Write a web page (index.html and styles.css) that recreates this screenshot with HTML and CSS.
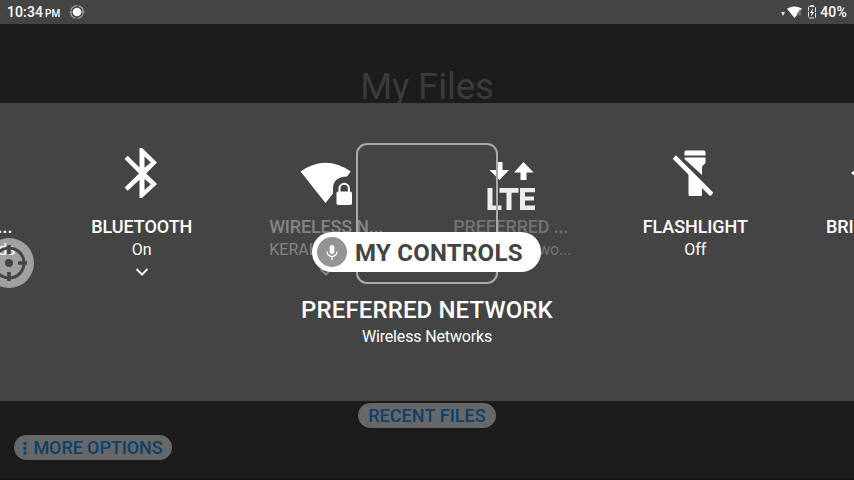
FILE: index.html
```html
<!DOCTYPE html>
<html lang="en">
<head>
<meta charset="utf-8">
<title>My Controls</title>
<link rel="stylesheet" href="styles.css">
</head>
<body>
<header class="status">
  <span class="clock">10:34<small>PM</small></span>
  <svg class="status-ring" width="16" height="16" viewBox="0 0 16 16"><circle cx="8" cy="8" r="4.300" fill="#fff"/><circle cx="8" cy="8" r="6.300" fill="none" stroke="#aaa" stroke-width="1.100" stroke-dasharray="8.300 1.600" stroke-dashoffset="-.8"/><path d="M.7 8h3M12.300 8h3" stroke="#bbb"/></svg>
  <svg class="signals" width="38" height="16" viewBox="0 0 38 16"><path d="M0 8h4L2 12z" fill="#ddd"/><path d="M6 4.800Q13.500 .2 21 4.800L13.500 14z" fill="#fff"/><path d="M19.500 5.500l-3 4.500h4M19 6v6" fill="none" stroke="#777" stroke-width="1.200"/><rect x="27.500" y="2.500" width="7" height="11.500" rx="1" fill="none" stroke="#e5e5e5" stroke-dasharray="5 1"/><path d="M29.500 1.500h3" stroke="#fff"/><path d="M32 4l-3 5h1.800l-.8 4 3-5h-1.800z" fill="#fff"/></svg>
  <span class="battery">40%</span>
</header>
<div class="title">My Files</div>
<main class="panel">
  <div class="cursor disc"></div>
  <div class="carousel">
    <section class="item">
      <div class="icon"></div>
      <h2>DO NOT DIS...</h2>
      <p>Allow all sounds</p>
    </section>
    <section class="item">
      <div class="icon"><svg width="60" height="60" viewBox="0 0 60 60"><path fill="#fff" fill-rule="evenodd" d="M27.500 5H30L45 19.500 34.200 30.500 45 41 30 55H27.500V36.800L15.700 47.800 12.600 44.500 27 30.500 12.600 16 15.700 12.700 27.500 24.500zM32.500 13.500V24.800L38.800 19.500zM32.500 36V47L38.800 41.200z"/></svg></div>
      <h2>BLUETOOTH</h2>
      <p>On</p>
      <svg class="chevron" width="14" height="10" viewBox="0 0 14 10"><path d="M1.500 2L7 7.500 12.500 2"/></svg>
    </section>
    <section class="item dim">
      <div class="icon"><svg width="60" height="60" viewBox="0 0 60 60"><path fill="#fff" d="M4.500 28.500Q29.500 11 54.700 28.500L51 33.500Q37 34 37 45.500V50.500L29.500 60z"/><rect x="40.500" y="48.500" width="15.500" height="13.500" rx="1.800" fill="#fff"/><path d="M43.500 49V45.500a4.700 4.700 0 0 1 9.400 0V49" fill="none" stroke="#fff" stroke-width="2"/></svg></div>
      <h2>WIRELESS N...</h2>
      <p>KERALA VISIO...</p>
      <svg class="chevron" width="14" height="10" viewBox="0 0 14 10"><path d="M1.500 2L7 7.500 12.500 2"/></svg>
    </section>
    <section class="item dimmer">
      <div class="icon"><svg width="60" height="60" viewBox="0 0 60 60"><path fill="#fff" d="M15.500 19h6v8H28L18.500 37 8.500 27h7zM42.500 19l10 10.500h-7V37h-6v-7.500H33z"/><path fill="#eee" d="M6.500 45h5v17.500h9V67h-14zM18.500 45h19v4.700h-7V67h-5V49.700h-7zM39 45h15v4.200H44v4.300h9v4H44v5h10V67H39z"/></svg></div>
      <h2>PREFERRED ...</h2>
      <p>Wireless Netwo...</p>
    </section>
    <section class="item">
      <div class="icon"><svg width="60" height="60" viewBox="0 0 60 60"><path fill="#fff" d="M19.500 12.500V9a1.500 1.500 0 0 1 1.500-1.500h18A1.500 1.500 0 0 1 40.500 9v3.500zM19.500 14.500h21V20L37 23.500V32L19.500 16zM23.500 28L37 42v9.500a1.500 1.500 0 0 1-1.500 1.500H25a1.500 1.500 0 0 1-1.500-1.500z"/><path d="M9.300 14L46.800 51.500" stroke="#fff" stroke-width="4.600"/></svg></div>
      <h2>FLASHLIGHT</h2>
      <p>Off</p>
    </section>
    <section class="item">
      <div class="icon"><svg width="60" height="60" viewBox="0 0 60 60"><path fill="#fff" d="M30 1l8 9h10v12l11 8-11 8v12H38l-8 9-8-9H12V38L1 30l11-8V10h10z"/></svg></div>
      <h2>BRIGHTNESS</h2>
    </section>
  </div>
  <div class="caption">
    <h1>PREFERRED NETWORK</h1>
    <p>Wireless Networks</p>
  </div>
  <div class="focus-frame"></div>
  <div class="voice-label">
    <svg width="30" height="30" viewBox="0 0 30 30"><circle cx="15" cy="15" r="15" fill="#949494"/><rect x="12.700" y="8" width="4.600" height="9" rx="2.300" fill="#fff"/><path d="M10 14.500a5 5 0 0 0 10 0M15 19.500V23" fill="none" stroke="#fff" stroke-width="1.300"/></svg>
    <span>MY CONTROLS</span>
  </div>
  <svg class="cursor" width="50" height="50" viewBox="0 0 50 50"><g fill="none" stroke="#444"><circle cx="25" cy="25" r="15" stroke-width="3"/><path d="M25 7v9M25 34v9M7 25h9M34 25h9" stroke-width="3.600"/></g><circle cx="25" cy="25" r="4" fill="#444"/></svg>
</main>
<footer class="footer">
  <button class="pill recent">RECENT FILES</button>
  <button class="pill more"><svg width="4" height="14" viewBox="0 0 4 14"><path d="M.5 1h3v3h-3zM.5 5.700h3v3h-3zM.5 10.400h3v3h-3z" fill="#0b416a"/></svg><span>MORE OPTIONS</span></button>
</footer>
</body>
</html>
```
FILE: styles.css
```css
* { box-sizing: border-box; }
body {
  margin: 0;
  width: 854px;
  height: 480px;
  overflow: hidden;
  display: grid;
  grid-template-rows: 24px 79px 298px 79px;
  background: #1c1c1c;
  color: #fff;
  font-family: Roboto, "Liberation Sans", sans-serif;
}
h1, h2, p { margin: 0; font-weight: 500; white-space: nowrap; }
svg { display: block; flex: none; }
.status {
  display: flex;
  align-items: center;
  padding: 0 7px;
  background: #444;
  font-size: 14px;
  font-weight: 500;
}
.clock { letter-spacing: .1px; }
.clock small { font-size: 10px; margin-left: 2px; letter-spacing: 0; }
.status-ring { margin-left: 9px; }
.signals { margin-left: auto; }
.battery { margin-left: 1px; letter-spacing: .2px; }
.title {
  overflow: hidden;
  padding-top: 41px;
  text-align: center;
  font-size: 36.500px;
  line-height: 44px;
  letter-spacing: -.1px;
  color: #3b3b3b;
}
.panel { position: relative; overflow: hidden; background: #444; }
.carousel {
  position: relative;
  display: grid;
  grid-template-columns: repeat(6, 184.500px);
  height: 193px;
  margin-left: -135px;
  padding-top: 40px;
}
.item { display: flex; flex-direction: column; align-items: center; }
.icon { width: 60px; height: 60px; margin-bottom: 12px; }
.icon svg { overflow: visible; }
.item h2 { font-size: 18px; line-height: 24px; letter-spacing: -.08px; }
.item p { font-size: 16px; line-height: 22px; font-weight: 400; }
.dim h2, .dim p { color: #858585; }
.dimmer h2, .dimmer p { color: #737373; }
.item.dim h2, .item.dimmer h2 { letter-spacing: -.17px; }
.item.dimmer p { letter-spacing: -.15px; }
.chevron { margin-top: 6px; fill: none; stroke: #eee; stroke-width: 2; }
.dim .chevron { stroke: #858585; }
.caption { text-align: center; }
.caption h1 { font-size: 24px; line-height: 28px; letter-spacing: .12px; }
.caption p { font-size: 16px; line-height: 26px; font-weight: 400; letter-spacing: -.15px; }
.focus-frame {
  position: absolute;
  left: 356px;
  top: 40px;
  width: 142px;
  height: 141px;
  border: 2px solid #aaa;
  border-radius: 11px;
}
.voice-label {
  position: absolute;
  left: 312px;
  top: 129px;
  width: 229px;
  height: 40px;
  display: flex;
  align-items: center;
  gap: 8px;
  padding-left: 5px;
  border-radius: 20px;
  background: #fff;
  color: #444;
  font-size: 24px;
  font-weight: 700;
  letter-spacing: .25px;
  white-space: nowrap;
}
.voice-label span { padding-top: 2px; }
.cursor { position: absolute; left: -16px; top: 135px; }
.disc { width: 50px; height: 50px; border-radius: 50%; background: #a0a0a0; }
.footer { padding: 2px 14px; border-bottom: 2px solid #1d1014; }
.pill {
  display: flex;
  align-items: center;
  justify-content: center;
  height: 25px;
  padding: 0;
  border: 0;
  border-radius: 13px;
  background: #676767;
  color: #0b416a;
  font: 500 18px/25px Roboto, "Liberation Sans", sans-serif;
  white-space: nowrap;
}
.recent { width: 138px; margin: 0 auto; letter-spacing: .08px; }
.more { width: 158px; margin-top: 7px; gap: 6px; letter-spacing: -.08px; }
```
